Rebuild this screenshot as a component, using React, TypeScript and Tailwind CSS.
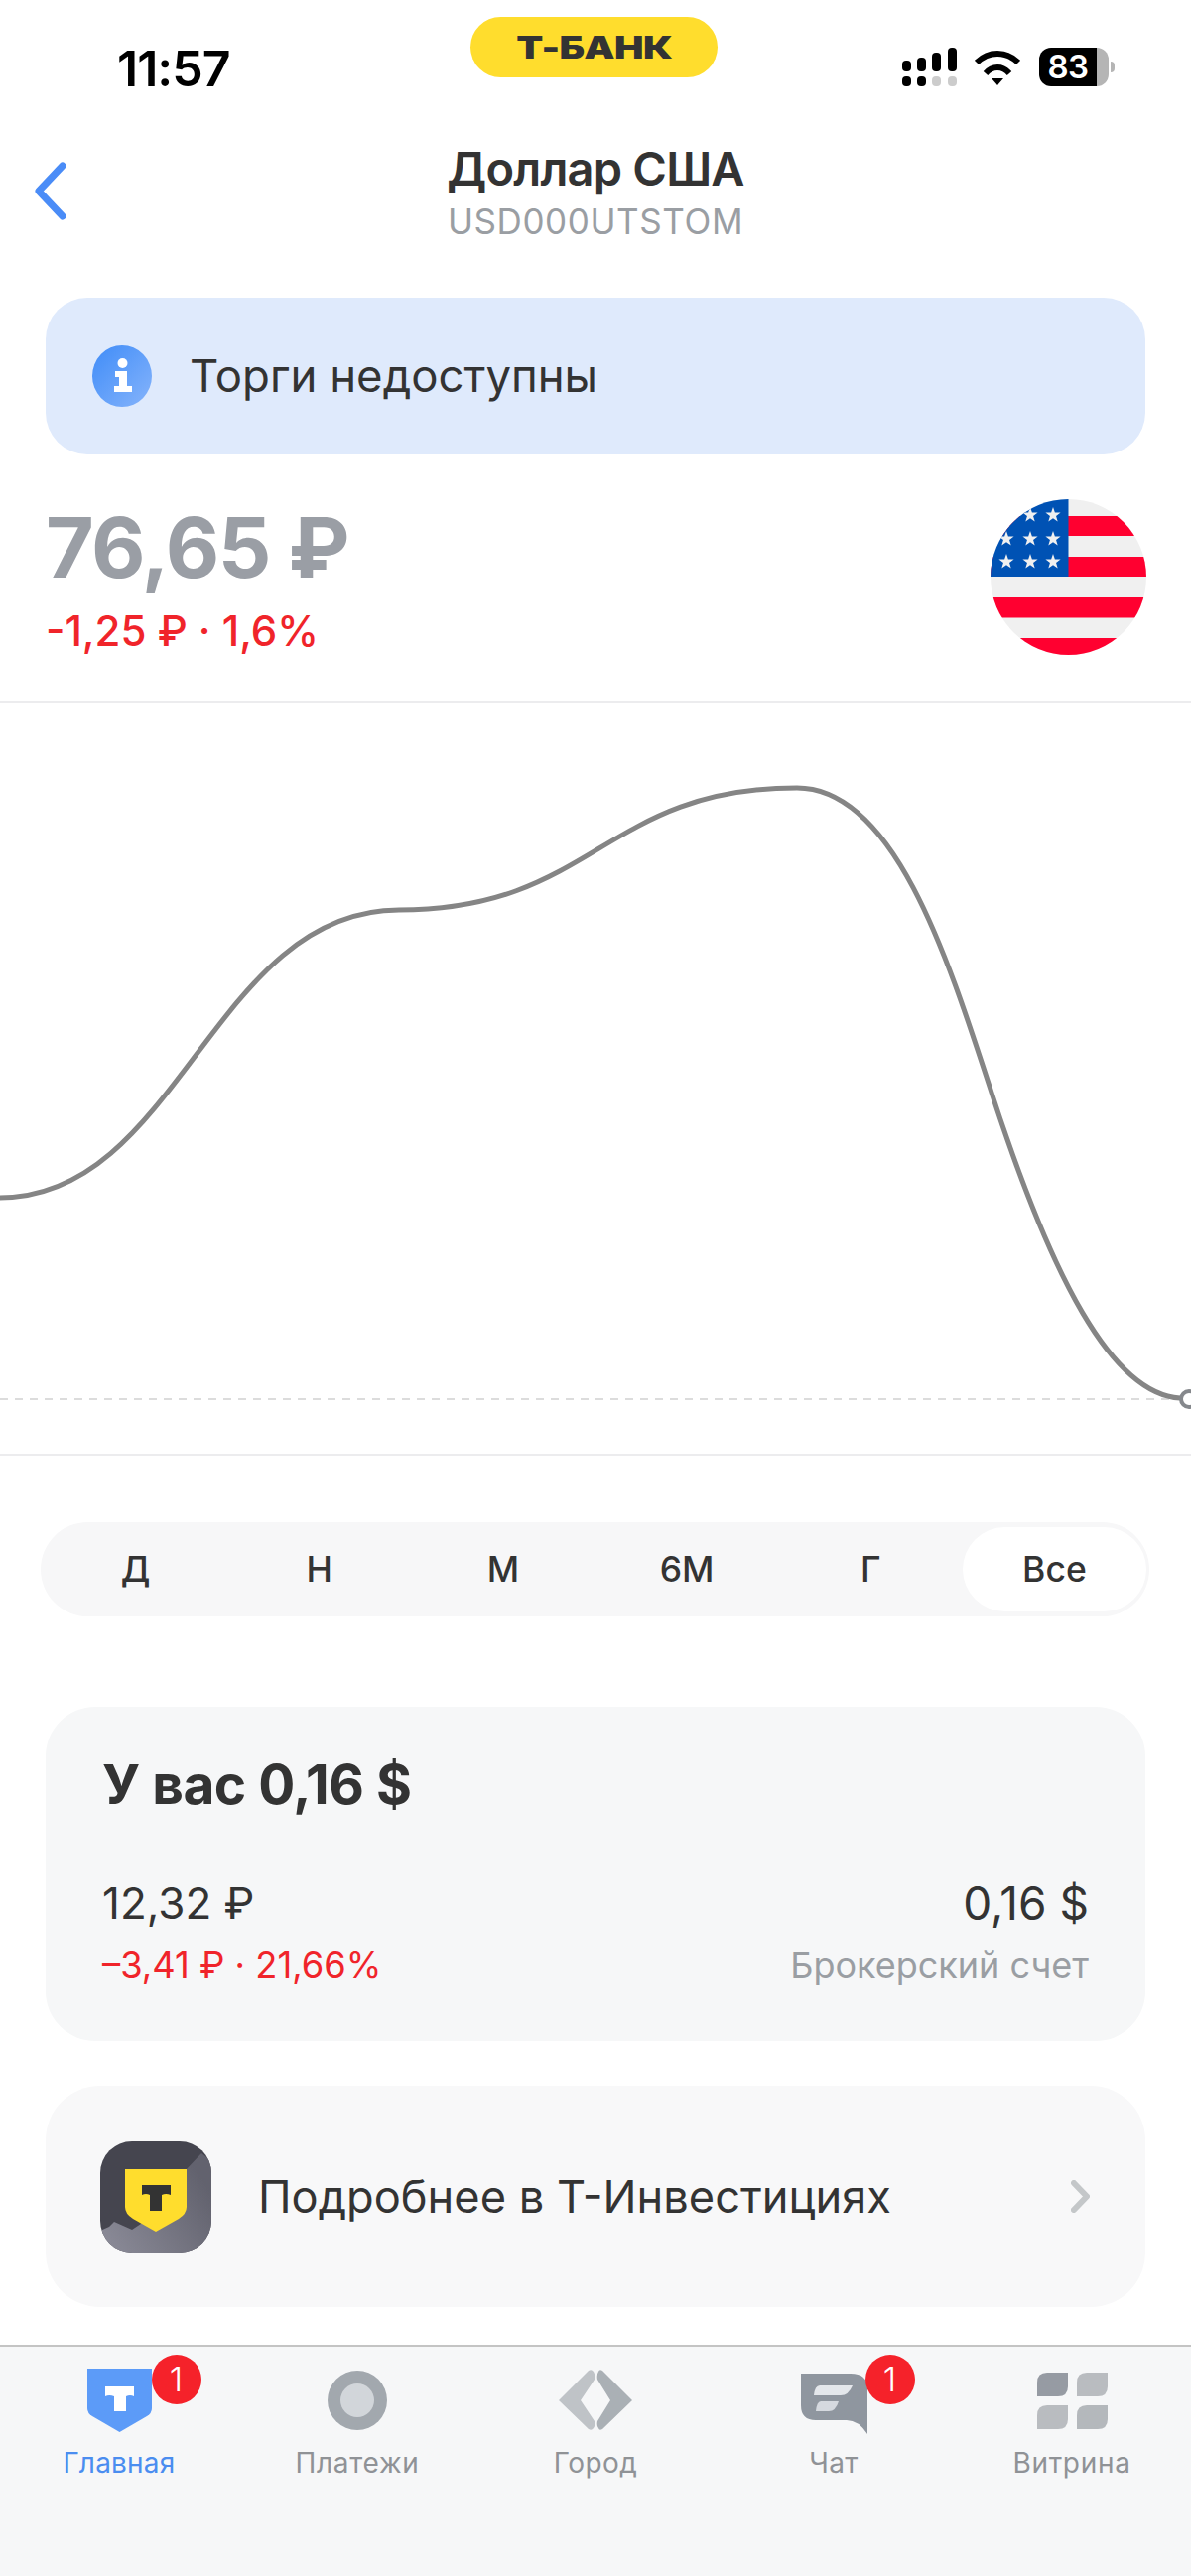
const font = "font-['Inter','Liberation_Sans',sans-serif]";

const chartPath =
  'M0 1207 C180 1207 215 917 402 917 C598 917 608 794 803 794 C900 794 954 962 999 1101 C1059 1286 1120 1405 1189 1409';

const periods = ['Д', 'Н', 'М', '6М', 'Г', 'Все'];

// y, height and colour of the flag stripes
const stripes = [
  { y: 17, h: 20, fill: '#ff0030' },
  { y: 58, h: 20, fill: '#ff0030' },
  { y: 99, h: 20.5, fill: '#ff0030' },
  { y: 140, h: 17, fill: '#ff0030' },
];
const stars = [[40, 16], [63, 16], [16, 40], [40, 40], [63, 40], [16, 63], [40, 63], [63, 63]];

function Star({ x, y }: { x: number; y: number }) {
  const pts = Array.from({ length: 10 }, (_, i) => {
    const r = i % 2 === 0 ? 8 : 3.2;
    const a = (Math.PI / 5) * i - Math.PI / 2;
    return `${x + r * Math.cos(a)},${y + r * Math.sin(a)}`;
  }).join(' ');
  return <polygon points={pts} fill="#f0f0f0" />;
}

function Flag() {
  return (
    <svg width="157" height="157" viewBox="0 0 157 157" className="shrink-0">
      <defs>
        <clipPath id="flagClip">
          <circle cx="78.5" cy="78.5" r="78.5" />
        </clipPath>
      </defs>
      <g clipPath="url(#flagClip)">
        <rect width="157" height="157" fill="#f0f0f0" />
        {stripes.map((s) => (
          <rect key={s.y} y={s.y} width="157" height={s.h} fill={s.fill} />
        ))}
        <rect width="78.5" height="78" fill="#0052b4" />
        {stars.map(([x, y]) => (
          <Star key={`${x}-${y}`} x={x} y={y} />
        ))}
      </g>
    </svg>
  );
}

function Badge() {
  return (
    <span className="absolute left-[65px] top-[-14px] flex h-[50px] w-[50px] items-center justify-center rounded-full bg-[#f5222a] text-[34px] font-light leading-none text-white">
      1
    </span>
  );
}

export default function App() {
  return (
    <div className={`${font} relative flex h-[2596px] w-[1200px] flex-col overflow-hidden bg-white text-[#333333]`}>
      {/* status bar */}
      <div className="flex h-[100px] items-start">
        <div className="mt-[44px] w-[474px] pl-[118px] text-[50px] font-semibold leading-[50px] tracking-[-1px] text-black">11:57</div>
        <div className="mt-[17px] flex h-[61px] w-[249px] items-center justify-center rounded-full bg-[#ffdd2d] text-[#333333]">
          <span className="scale-x-[1.23] text-[32px] font-black leading-none tracking-[-0.5px]">Т-БАНК</span>
        </div>
        <div className="mt-[48px] ml-[186px] flex items-start">
          <svg width="55" height="39" viewBox="0 0 55 39">
            <rect x="0" y="13" width="9" height="11" rx="4" fill="#000" />
            <rect x="15" y="10" width="9" height="14" rx="4" fill="#000" />
            <rect x="30" y="5" width="9" height="19" rx="4" fill="#000" />
            <rect x="46" y="0" width="9" height="24" rx="4" fill="#000" />
            <rect x="0" y="29" width="9" height="10" rx="4" fill="#000" />
            <rect x="15" y="29" width="9" height="10" rx="4" fill="#000" />
            <rect x="30" y="29" width="9" height="10" rx="4" fill="#cccccc" />
            <rect x="46" y="29" width="9" height="10" rx="4" fill="#cccccc" />
          </svg>
          <svg width="46" height="35" viewBox="0 0 46 35" className="ml-[18px] mt-[3px]">
            <path d="M2 12 C14 0 32 0 44 12" fill="none" stroke="#000" strokeWidth="6" />
            <path d="M11 23 C18 15 28 15 35 23" fill="none" stroke="#000" strokeWidth="6" />
            <path d="M17 28 L29 28 L23 35 Z" fill="#000" />
          </svg>
          <div className="ml-[19px] flex h-[39px] w-[70px] overflow-hidden rounded-[12px]">
            <div className="flex w-[58px] items-center justify-center bg-black text-[33px] font-semibold leading-none tracking-[-0.5px] text-white">83</div>
            <div className="flex-1 bg-[#b5b5b5]" />
          </div>
          <div className="ml-[2px] mt-[14px] h-[11px] w-[4px] rounded-r-full bg-[#b5b5b5]" />
        </div>
      </div>

      {/* header */}
      <div className="mt-[42px] grid h-[100px] grid-cols-[1fr_auto_1fr]">
        <div className="pl-[34px] pt-[21px]">
          <svg width="33" height="59" viewBox="0 0 33 59">
            <path d="M29 4 L5 29.5 L29 55" fill="none" stroke="#4a8cf7" strokeWidth="7" strokeLinecap="round" strokeLinejoin="round" />
          </svg>
        </div>
        <div className="flex flex-col items-center">
          <div className="text-[47px] font-semibold leading-[56px] tracking-[-0.8px]">Доллар США</div>
          <div className="mt-[4px] text-[35px] leading-[42px] tracking-[0.6px] text-[#9a9ea3]">USD000UTSTOM</div>
        </div>
        <div />
      </div>

      {/* unavailable banner */}
      <div className="mx-[46px] mt-[58px] flex h-[158px] items-center rounded-[42px] bg-[#dfeafc] pl-[47px]">
        <svg width="60" height="62" viewBox="0 0 60 62" className="shrink-0">
          <defs>
            <linearGradient id="infoBlue" x1="0" y1="0" x2="1" y2="1">
              <stop offset="0" stopColor="#3f8cf8" />
              <stop offset="1" stopColor="#86b4fb" />
            </linearGradient>
          </defs>
          <ellipse cx="30" cy="31" rx="30" ry="31" fill="url(#infoBlue)" />
          <circle cx="30.5" cy="18" r="5" fill="#fff" />
          <path d="M23 26 H35 V41 H40 V47 H22 V41 H27 V32 H23 Z" fill="#fff" />
        </svg>
        <span className="ml-[38px] text-[45.5px] leading-none">Торги недоступны</span>
      </div>

      {/* price */}
      <div className="flex h-[248px] justify-between pl-[46px] pr-[45px] pt-[45px]">
        <div>
          <div className="mt-[14px] text-[84px] font-bold leading-[70px] tracking-[-1.5px] text-[#9a9ea5]">76,65 ₽</div>
          <div className="mt-[24px] text-[42px] font-medium leading-[50px] text-[#f0242a]">-1,25 ₽ · 1,6%</div>
        </div>
        <Flag />
      </div>

      {/* chart */}
      <div className="h-[761px] border-y-2 border-[#ececee]">
        <svg width="1200" height="757" viewBox="0 708 1200 757" className="block">
          <line x1="0" y1="1410" x2="1190" y2="1410" stroke="#dcdcdc" strokeWidth="2" strokeDasharray="8 7" />
          <path d={chartPath} fill="none" stroke="#858585" strokeWidth="5" />
          <circle cx="1198" cy="1410" r="8" fill="#fff" stroke="#85888c" strokeWidth="4" />
        </svg>
      </div>

      {/* period switch */}
      <div className="ml-[41px] mt-[67px] grid h-[95px] w-[1117px] grid-cols-6 rounded-full bg-[#f7f7f8] px-[3px] py-[5px]">
        {periods.map((p) => (
          <div
            key={p}
            className={`flex items-center justify-center rounded-full text-[35.5px] font-medium leading-none ${p === 'Все' ? 'bg-white' : ''}`}
          >
            {p}
          </div>
        ))}
      </div>

      {/* position */}
      <div className="mx-[46px] mt-[91px] h-[337px] rounded-[50px] bg-[#f6f7f8] px-[57px] pt-[48px]">
        <div className="text-[55px] font-bold leading-[60px] tracking-[-0.5px]">У вас 0,16 $</div>
        <div className="mt-[62px] flex justify-between">
          <div>
            <div className="text-[44px] leading-[56px]">12,32 ₽</div>
            <div className="mt-[12px] text-[36.3px] leading-[44px] text-[#f0242a]">–3,41 ₽ · 21,66%</div>
          </div>
          <div className="text-right">
            <div className="text-[46px] leading-[56px]">0,16 $</div>
            <div className="mt-[12px] text-[36px] leading-[44px] text-[#9a9ea3]">Брокерский счет</div>
          </div>
        </div>
      </div>

      {/* investments link */}
      <div className="mx-[46px] mt-[45px] flex h-[223px] items-center rounded-[55px] bg-[#f8f8f9] pl-[55px] pr-[56px]">
        <svg width="112" height="112" viewBox="0 0 112 112" className="shrink-0 rounded-[32px]">
          <defs>
            <linearGradient id="appHill" x1="0" y1="1" x2="1" y2="0.4">
              <stop offset="0" stopColor="#8d8d9a" />
              <stop offset="1" stopColor="#62626e" />
            </linearGradient>
          </defs>
          <rect width="112" height="112" fill="#45454f" />
          <path d="M0 90 L9 86 L14 81 L32 89 L41 83 L86 29 L102 12 L112 20 V112 H0 Z" fill="url(#appHill)" />
          <path d="M25 28 H87 V66 Q87 73 79 78 L56 91 L33 78 Q25 73 25 66 Z" fill="#ffdd2d" />
          <path d="M42 44 H71 V54 Q66 52 62 54 V70 H50 V54 Q46 52 42 54 Z" fill="#333333" />
        </svg>
        <span className="ml-[47px] text-[45.2px] leading-none">Подробнее в Т-Инвестициях</span>
        <svg width="19" height="33" viewBox="0 0 19 33" className="ml-auto shrink-0">
          <path d="M3 3 L16 16.5 L3 30" fill="none" stroke="#c4c7c9" strokeWidth="6" strokeLinecap="round" strokeLinejoin="round" />
        </svg>
      </div>

      {/* tab bar */}
      <div className="mt-auto grid h-[233px] grid-cols-5 border-t-2 border-[#c4c4c4] bg-[#f6f7f8] pt-[22px]">
        <div className="flex flex-col items-center">
          <div className="relative flex h-[64px] w-[65px] items-center justify-center">
            <svg width="65" height="64" viewBox="0 0 65 64">
              <path d="M0 0 H65 V40 Q65 45 60 48 L32.5 64 L5 48 Q0 45 0 40 Z" fill="#5c9bf8" />
              <path d="M18 18 H47 V28 Q43 26 39 28 V43 H27 V28 Q22 26 18 28 Z" fill="#fff" />
            </svg>
            <Badge />
          </div>
          <span className="mt-[13px] text-[28px] leading-[36px] tracking-[0.2px] text-[#4a8df0]">Главная</span>
        </div>
        <div className="flex flex-col items-center">
          <div className="flex h-[64px] items-center">
            <svg width="60" height="60" viewBox="0 0 60 60">
              <circle cx="30" cy="30" r="30" fill="#a2a8ae" />
              <circle cx="30" cy="30" r="17" fill="#d2d6da" />
            </svg>
          </div>
          <span className="mt-[13px] text-[28px] leading-[36px] tracking-[0.7px] text-[#8f9296]">Платежи</span>
        </div>
        <div className="flex flex-col items-center">
          <div className="flex h-[64px] items-center">
            <svg width="74" height="62" viewBox="563 2386 74 62">
              <path d="M593 2387 Q596 2385 598 2388 Q600 2391 599 2396 L585 2417 L599 2438 Q600 2443 598 2445 Q596 2448 593 2446 L563 2417 Z" fill="#bfc3c7" />
              <path d="M607 2387 Q604 2385 603 2388 Q601 2391 602 2396 L615 2417 L602 2438 Q601 2443 603 2445 Q604 2448 607 2446 L637 2417 Z" fill="#aab0b5" />
            </svg>
          </div>
          <span className="mt-[13px] text-[28px] leading-[36px] tracking-[0.4px] text-[#8f9296]">Город</span>
        </div>
        <div className="flex flex-col items-center">
          <div className="relative h-[64px] w-[67px] pt-[5px]">
            <svg width="67" height="61" viewBox="0 0 67 61" className="block">
              <path d="M0 0 H50 Q67 0 67 15 V61 Q58 47 46 47 H15 Q0 47 0 32 Z" fill="#8f969f" />
              <path d="M19 12 H52 Q48 22 40 22 H13 Q14 12 19 12 Z" fill="#e4e7eb" />
              <path d="M20 28 H38 Q35 38 28 38 H15 Q16 28 20 28 Z" fill="#d5d9df" />
            </svg>
            <Badge />
          </div>
          <span className="mt-[13px] text-[28px] leading-[36px] tracking-[0.4px] text-[#8f9296]">Чат</span>
        </div>
        <div className="flex flex-col items-center">
          <div className="flex h-[64px] items-center">
            <svg width="71" height="57" viewBox="0 0 71 57">
              <path d="M10 0 H31 V14 Q31 24 21 24 H0 V10 Q0 0 10 0 Z" fill="#969ba3" />
              <path d="M50 0 H71 V14 Q71 24 61 24 H40 V10 Q40 0 50 0 Z" fill="#b9bcc0" />
              <path d="M10 33 H31 V47 Q31 57 21 57 H0 V43 Q0 33 10 33 Z" fill="#b9bcc0" />
              <path d="M50 33 H71 V47 Q71 57 61 57 H40 V43 Q40 33 50 33 Z" fill="#b4b8bc" />
            </svg>
          </div>
          <span className="mt-[13px] text-[28px] leading-[36px] tracking-[0.7px] text-[#8f9296]">Витрина</span>
        </div>
      </div>
    </div>
  );
}
